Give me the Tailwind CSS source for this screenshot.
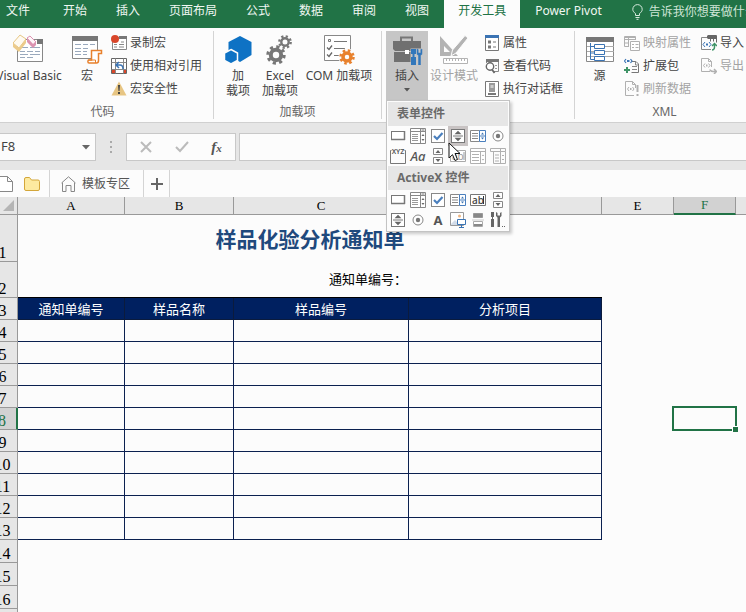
<!DOCTYPE html>
<html lang="zh-CN">
<head>
    <meta charset="UTF-8">
    <meta name="viewport" content="width=device-width, initial-scale=1.0">
    <title>样品化验分析通知单</title>
    <script src="https://cdn.jsdelivr.net/npm/@tailwindcss/browser@4"></script>
</head>
<body class="h-screen overflow-hidden flex flex-col bg-[#fcfcfc] text-xs text-[#444] font-['Noto_Sans','Noto_Sans_CJK_SC',sans-serif]">

    <!-- Shared icons -->
    <svg class="hidden">
        <symbol id="i-button" viewBox="0 0 16 16"><rect x="1.5" y="3.5" width="13" height="8" fill="#fff" stroke="#777"/><path d="M1 11.500h14M14.500 3v9" stroke="#777" stroke-width="1.500"/></symbol>
        <symbol id="i-list" viewBox="0 0 16 16"><path d="M.5 .5h15v15H.5zM10.500 .5v15M.5 3.500h15" fill="#fff" stroke="#888"/><path d="M2 6.500h6M2 8.500h6M2 10.500h6M2 12.500h6" stroke="#999"/><path d="M11.500 2h3" stroke="#777"/><path d="M11.500 8L13 6l1.500 2zM11.500 11l1.500 2 1.500-2z" fill="#666"/></symbol>
        <symbol id="i-check" viewBox="0 0 16 16"><rect x="1.500" y="1.500" width="13" height="13" fill="#fff" stroke="#888"/><path d="M4 8l3 3 5.500-6" fill="none" stroke="#4a7fbd" stroke-width="2.200"/></symbol>
        <symbol id="i-spin" viewBox="0 0 16 16"><rect x="1.500" y="1.500" width="13" height="13" fill="#fff" stroke="#777"/><path d="M3 8h10" stroke="#777"/><path d="M4.500 6.200L8 2.700l3.500 3.500zM4.500 9.800L8 13.300l3.500-3.500z" fill="#666"/></symbol>
        <symbol id="i-combo" viewBox="0 0 16 16"><path d="M9.500 2.500h-9v11h9" fill="#fff" stroke="#888"/><path d="M2 5.500h6M2 8h6M2 10.500h6" stroke="#888"/><path d="M9.500 2.500h6v11h-6zM9.500 8h6" fill="#fff" stroke="#4a7fbd"/><path d="M11 6.500l1.500-2 1.500 2zM11 9.500l1.500 2 1.500-2z" fill="#3b74b4"/></symbol>
        <symbol id="i-radio" viewBox="0 0 16 16"><circle cx="8" cy="8" r="5" fill="#fff" stroke="#888"/><circle cx="8" cy="8" r="2.200" fill="#777"/></symbol>
        <symbol id="i-scroll" viewBox="0 0 16 16"><path d="M3.500 .5h9v6h-9zM3.500 9.500h9v6h-9z" fill="#fff" stroke="#888"/><path d="M5.500 5L8 2l2.500 3zM5.500 11L8 14l2.500-3z" fill="#666"/></symbol>
        <symbol id="i-listbox" viewBox="0 0 16 16"><path d="M.5 .5h15v15H.5zM10.500 3.500v12M.5 3.500h15" fill="#fff" stroke="#b0b0b0"/><path d="M2 6.500h7M2 9.500h7M2 12.500h7" stroke="#b0b0b0"/><path d="M11.800 8L13 6.500 14.200 8zM11.800 11l1.200 1.500 1.200-1.500z" fill="#aaa"/></symbol>
    </svg>

    <!-- Ribbon tabs -->
    <header class="flex flex-none gap-px h-7 bg-[#217346] text-[#f0f7f2] leading-[22px] whitespace-nowrap overflow-hidden">
        <button class="flex-none pl-[6px] pr-[18px] pb-[6px]">文件</button>
        <button class="flex-none px-[14px] pb-[6px]">开始</button>
        <button class="flex-none px-[14px] pb-[6px]">插入</button>
        <button class="flex-none px-[14px] pb-[6px]">页面布局</button>
        <button class="flex-none px-[14px] pb-[6px]">公式</button>
        <button class="flex-none px-[14px] pb-[6px]">数据</button>
        <button class="flex-none px-[14px] pb-[6px]">审阅</button>
        <button class="flex-none px-[14px] pb-[6px]">视图</button>
        <button class="flex-none px-[14px] pb-[6px] bg-[#fcfcfc] text-[#217346]">开发工具</button>
        <button class="flex-none px-[14px] pb-[6px]">Power Pivot</button>
        <label class="flex flex-1 min-w-0 items-center gap-[6px] pl-[15px] pb-[4px]">
            <svg class="flex-none" width="11" height="16" viewBox="0 0 11 16" fill="none" stroke="#d6eadd"><path d="M3.500 11.500v-2C2 8.500.8 7.200.8 5.300a4.700 4.700 0 0 1 9.400 0c0 1.900-1.200 3.200-2.700 4.200v2zM3.500 13.500h4M4.500 15.300h2"/></svg>
            <input type="text" aria-label="告诉我你想要做什么" placeholder="告诉我你想要做什么" class="flex-1 min-w-0 outline-none placeholder:text-[#cfe5d7]">
        </label>
    </header>

    <!-- Ribbon -->
    <div class="flex flex-none -ml-2 pt-[3px] pb-[3px] border-b border-[#d0d0d0] leading-[15px] whitespace-nowrap">
        <!-- 代码 -->
        <section class="flex flex-none flex-col border-r border-[#d4d4d4]">
            <div class="flex h-[70px]">
                <button class="flex flex-col items-center w-[74px] pt-[2px]">
                    <svg class="mb-[3px]" width="32" height="32" viewBox="0 0 32 32" fill="none"><path d="M4.500 6.500h25v22h-25z" fill="#fff" stroke="#888"/><path d="M24 6h6v5h-6z" fill="#777"/><path d="M7 14.500h8M17 14.500h10M7 18.500h5M14 18.500h6M22 18.500h5M7 21.500h8M17 21.500h10M7 24.500h5M14 24.500h6" stroke="#9aa9bd"/><path d="M0 10l7-8 6 4-7 9z" fill="#fffaf0" stroke="#e6c684"/><path d="M0 10l6 5v4l-6-5zM6 15l7-9v4l-7 9z" fill="#eccb8b"/><path d="M14 5l3-2 6 6-3 3z" fill="#fff5f9" stroke="#dc93b1"/><path d="M14 5l6 6v4l-6-6zM20 11l3-3v4l-3 3z" fill="#dc93b1"/></svg>
                    Visual Basic
                </button>
                <button class="flex flex-col items-center w-[42px] pt-[2px]">
                    <svg class="mb-[3px]" width="32" height="32" viewBox="0 0 32 32" fill="none"><path d="M1.500 3.500h25v22h-25z" fill="#fff" stroke="#888"/><path d="M1 3h26v5H1z" fill="#777"/><path d="M4 11.500h6M12 11.500h5M19 11.500h5M4 15.500h6M12 15.500h5M4 18.500h6M12 18.500h4M4 21.500h6M12 21.500h4" stroke="#9aa9bd"/><path d="M20.500 17.500h10v3h-3v7c0 2-1 2.500-2 2.500h-7.500c-1.500 0-1.500-3 0-3h2.500z" fill="#fff" stroke="#e8812d" stroke-width="1.500"/><path d="M17 27h7.500v3" stroke="#e8812d"/></svg>
                    宏
                </button>
                <div class="flex flex-col pl-[3px] pr-[11px]">
                    <button class="flex items-center gap-[3px] h-[23px]">
                        <svg width="16" height="16" viewBox="0 0 16 16" fill="none"><path d="M1.500 2.500h14v12h-14z" fill="#fff" stroke="#888"/><path d="M8 1h8v3H8z" fill="#777"/><path d="M3 9.500h3M8 9.500h5M3 12h3M8 12h5M10 7h3" stroke="#888"/><circle cx="4" cy="4" r="4" fill="#d9472b"/></svg>
                        录制宏
                    </button>
                    <button class="flex items-center gap-[3px] h-[23px]">
                        <svg width="16" height="16" viewBox="0 0 16 16" fill="none"><path d="M.5 .5h15v15H.5z" fill="#fff" stroke="#666"/><path d="M.5 4.500h15M.5 11.500h15M4.500 .5v15M12.500 .5v15" stroke="#888"/><path d="M5 5h7v6H5z" fill="#fff"/><path d="M1 12h3v3H1zM13 12h2v3h-2z" fill="#d9472b"/><path d="M5 7h4c3 0 3 2 3 4M8 4L5 7l3 3" stroke="#3b74b4" stroke-width="1.500"/></svg>
                        使用相对引用
                    </button>
                    <button class="flex items-center gap-[3px] h-[23px]">
                        <svg width="16" height="16" viewBox="0 0 16 16"><path d="M8 .5L15.500 14.500H.5z" fill="#e7c583"/><path d="M7 4h2l-.5 6h-1zM7 11h2v2H7z" fill="#444"/></svg>
                        宏安全性
                    </button>
                </div>
            </div>
            <h2 class="text-center text-[#666] pt-[3px]">代码</h2>
        </section>

        <!-- 加载项 -->
        <section class="flex flex-none flex-col border-r border-[#d4d4d4]">
            <div class="flex h-[70px] pl-[5px] pr-[6px]">
                <button class="flex flex-col items-center w-[38px] pt-[2px]">
                    <svg class="mb-[3px]" width="32" height="32" viewBox="0 0 32 32" fill="#0e72c4"><path d="M18 3l11.500 6v13L18 29 6.500 22V9z"/><path d="M9 16.500l6.500 3.500v7.500L9 31l-6.500-3.500V20z" stroke="#fcfcfc" stroke-width="1.500"/></svg>
                    <span>加</span>
                    <span>载项</span>
                </button>
                <button class="flex flex-col items-center w-[46px] pt-[2px]">
                    <svg class="mb-[3px]" width="32" height="32" viewBox="0 0 32 32" fill="none" stroke="#777"><circle cx="12" cy="22" r="5.200" stroke-width="4"/><circle cx="12" cy="22" r="8.200" stroke-width="3" stroke-dasharray="3.200 3.240"/><circle cx="21" cy="9" r="3.700" stroke-width="2.400"/><circle cx="21" cy="9" r="5.700" stroke-width="2.400" stroke-dasharray="2.200 2.277"/></svg>
                    <span>Excel</span>
                    <span>加载项</span>
                </button>
                <button class="flex flex-col items-center w-[72px] pt-[2px]">
                    <svg class="mb-[3px]" width="32" height="32" viewBox="0 0 32 32" fill="none"><path d="M1.500 2.500h26v25h-26z" fill="#fff" stroke="#888"/><path d="M5.500 6.500h2v2h-2zM11 8.500h13M11 15.500h11M11 22.500h5" stroke="#777"/><path d="M4 14.500l2 2 3-4M4 21.500l2 2 3-4" stroke="#666" stroke-width="1.300"/><circle cx="24" cy="24" r="8.500" fill="#fcfcfc"/><circle cx="24" cy="24" r="4" stroke="#e8812d" stroke-width="3.500"/><circle cx="24" cy="24" r="6.500" stroke="#e8812d" stroke-width="2.500" stroke-dasharray="2.550 2.555"/></svg>
                    COM 加载项
                </button>
            </div>
            <h2 class="text-center text-[#666] pt-[3px]">加载项</h2>
        </section>

        <!-- 控件 -->
        <section class="flex flex-none flex-col border-r border-[#d4d4d4]">
            <div class="flex h-[70px] pl-1 pr-[11px]">
                <div class="relative">
                    <button aria-expanded="true" class="flex flex-col items-center w-[42px] h-[69px] pt-[2px] bg-[#c6c6c6]">
                        <svg class="mb-[3px]" width="32" height="32" viewBox="0 0 32 32" fill="none"><path d="M10 8V4.500h11V8" stroke="#777" stroke-width="2"/><path d="M2 8h28v8l-2 2H4l-2-2z" fill="#707070"/><path d="M3 19h26v10H3z" fill="#707070"/><path d="M14 17h4v4h-4z" fill="#fff"/><path d="M19.500 15.500H32V32H19.500z" fill="#c6c6c6"/><path d="M20 16h5v5h-1.500v3H25v8h-5v-8h1.500v-3H20z" fill="#3277bb"/><path d="M26 16v4c0 1.500.5 2 1.500 2.500V32h2v-9.500c1-.5 1.500-1 1.500-2.500v-4l-1.200.6V20h-2.600v-3.400z" fill="#3277bb" stroke="#3277bb" stroke-width=".5"/></svg>
                        插入
                        <svg class="mt-[5px]" width="6" height="4" viewBox="0 0 6 4"><path d="M0 0h6L3 3.500z" fill="#555"/></svg>
                    </button>
                    <!-- Controls menu -->
                    <div class="absolute left-0 top-[69px] z-20 p-px border border-[#c3c3c3] bg-[#fcfcfc] shadow-[2px_2px_3px_rgba(0,0,0,0.2)]">
                        <h3 class="h-6 pl-[9px] leading-6 bg-[#e6e6e6] font-bold text-[#6a6a6a]">表单控件</h3>
                        <div class="grid grid-cols-[repeat(6,20px)] auto-rows-[20px]">
                            <button aria-label="按钮" class="grid place-items-center"><svg width="16" height="16"><use href="#i-button"/></svg></button>
                            <button aria-label="组合框" class="grid place-items-center"><svg width="16" height="16"><use href="#i-list"/></svg></button>
                            <button aria-label="复选框" class="grid place-items-center"><svg width="16" height="16"><use href="#i-check"/></svg></button>
                            <button aria-label="数值调节钮" class="grid place-items-center bg-[#c8c3c3]"><svg width="16" height="16"><use href="#i-spin"/></svg></button>
                            <button aria-label="列表框" class="grid place-items-center"><svg width="16" height="16"><use href="#i-combo"/></svg></button>
                            <button aria-label="选项按钮" class="grid place-items-center"><svg width="16" height="16"><use href="#i-radio"/></svg></button>
                            <button aria-label="分组框" class="grid place-items-center">
                                <svg width="16" height="18" viewBox="0 0 16 18"><path d="M1.500 3.500h-1v13h15v-13h-1" fill="none" stroke="#777"/><text x="8" y="7" text-anchor="middle" font-size="7" font-weight="600" fill="#555">XYZ</text></svg>
                            </button>
                            <button aria-label="标签" class="grid place-items-center text-[13px] leading-4 italic font-medium text-[#555]">Aa</button>
                            <button aria-label="滚动条" class="grid place-items-center"><svg width="16" height="16"><use href="#i-scroll"/></svg></button>
                            <button aria-label="文本域" disabled class="grid place-items-center">
                                <svg width="16" height="16" viewBox="0 0 16 16"><path d="M.5 2.500h15v11H.5z" fill="#fff" stroke="#aaa"/><text x="2" y="12" font-size="10" fill="#999">ab</text><path d="M14 4v8" stroke="#999"/></svg>
                            </button>
                            <button aria-label="组合列表编辑框" disabled class="grid place-items-center"><svg width="16" height="16"><use href="#i-listbox"/></svg></button>
                            <button aria-label="组合下拉编辑框" disabled class="grid place-items-center">
                                <svg width="16" height="16" viewBox="0 0 16 16" fill="none" stroke="#b0b0b0"><path d="M.5 .5h15v3H.5zM3.500 3.500v12h12v-12M10.500 .5v15M5 7h4M5 10h4M5 13h4M12 8l1-1 1 1M12 11l1 1 1-1"/></svg>
                            </button>
                        </div>
                        <h3 class="h-6 pl-[9px] leading-6 bg-[#e6e6e6] font-bold text-[#6a6a6a]">ActiveX 控件</h3>
                        <div class="grid grid-cols-[repeat(6,20px)] auto-rows-[20px]">
                            <button aria-label="命令按钮" class="grid place-items-center"><svg width="16" height="16"><use href="#i-button"/></svg></button>
                            <button aria-label="组合框" class="grid place-items-center"><svg width="16" height="16"><use href="#i-list"/></svg></button>
                            <button aria-label="复选框" class="grid place-items-center"><svg width="16" height="16"><use href="#i-check"/></svg></button>
                            <button aria-label="列表框" class="grid place-items-center"><svg width="16" height="16"><use href="#i-combo"/></svg></button>
                            <button aria-label="文本框" class="grid place-items-center">
                                <svg width="16" height="16" viewBox="0 0 16 16"><path d="M.5 2.500h15v11H.5z" fill="#fff" stroke="#777"/><text x="2" y="12" font-size="10" font-weight="500" fill="#444">ab</text><path d="M13.500 4v8" stroke="#333"/></svg>
                            </button>
                            <button aria-label="滚动条" class="grid place-items-center"><svg width="16" height="16"><use href="#i-scroll"/></svg></button>
                            <button aria-label="数值调节钮" class="grid place-items-center"><svg width="16" height="16"><use href="#i-spin"/></svg></button>
                            <button aria-label="选项按钮" class="grid place-items-center"><svg width="16" height="16"><use href="#i-radio"/></svg></button>
                            <button aria-label="标签" class="grid place-items-center text-[13px] leading-4 font-bold text-[#555]">A</button>
                            <button aria-label="图像" class="grid place-items-center">
                                <svg width="16" height="16" viewBox="0 0 16 16" fill="none"><path d="M.5 .5h13v13H.5z" fill="#fff" stroke="#999"/><path d="M1 12l4-4 3 3v2H1z" fill="#d3dce8"/><circle cx="9.500" cy="4" r="1.500" fill="#edb581"/><path d="M7.500 7.500h8v5h-8z" fill="#fff" stroke="#3b74b4"/><path d="M11.500 13v2M9 15.500h5" stroke="#3b74b4"/></svg>
                            </button>
                            <button aria-label="切换按钮" class="grid place-items-center">
                                <svg width="16" height="16" viewBox="0 0 16 16"><path d="M3.500 1.500h9v4h-9z" fill="#888" stroke="#999"/><path d="M2 8h12" stroke="#ccc"/><path d="M3.500 9.500h9v5h-9z" fill="#fff" stroke="#aaa"/><path d="M4 12h8v2H4z" fill="#888"/></svg>
                            </button>
                            <button aria-label="其他控件" class="grid place-items-center">
                                <svg width="16" height="16" viewBox="0 0 16 16" fill="#666"><path d="M1 0h3v5H3v2h1v8H1V7h1V5H1zM6 0v4l1.500 1.500V15h2.500V5.500L11.500 4V0L10 1v2.500H7.500V1z"/><path d="M12 14h1v1h-1zM14 14h1v1h-1z"/></svg>
                            </button>
                        </div>
                        <svg class="absolute left-[61px] top-[41px]" width="13" height="20" viewBox="0 0 13 20"><path d="M1 1v15l3.500-3.300L7 18.500l2.500-1-2.500-6h5z" fill="#fff" stroke="#111"/></svg>
                    </div>
                </div>
                <button disabled class="flex flex-col items-center w-[52px] pt-[2px] text-[#a3a3a3]">
                    <svg class="mb-[3px]" width="32" height="32" viewBox="0 0 32 32" fill="none"><path d="M2 3v20h18zM6 13v6h6z" fill="#b3b3b3" fill-rule="evenodd"/><path d="M27 2.500l3 2.500-12 15-5 3 1.500-6z" fill="#b3b3b3" stroke="#fcfcfc"/><path d="M5.500 25.500h24v5h-24z" fill="#fff" stroke="#b3b3b3"/><path d="M8.500 26v2M11.500 26v2M14.500 26v2M17.500 26v2M20.500 26v2M23.500 26v2M26.500 26v2" stroke="#b3b3b3"/></svg>
                    设计模式
                </button>
                <div class="flex flex-col pl-[5px]">
                    <button class="flex items-center gap-1 h-[23px]">
                        <svg width="14" height="16" viewBox="0 0 14 16" fill="none"><path d="M.5 1v14.500h13V1" fill="#fff" stroke="#777"/><path d="M0 0h14v3H0z" fill="#3b74b4"/><path d="M3 5.500h3v3H3zM3 10.500h3v3H3z" fill="#777"/><path d="M8 7h3M8 12h3" stroke="#777"/></svg>
                        属性
                    </button>
                    <button class="flex items-center gap-1 h-[23px]">
                        <svg width="14" height="16" viewBox="0 0 14 16" fill="none"><path d="M1.500 5V2.500h12v11H9" stroke="#888"/><path d="M1 1h13v3H1z" fill="#777"/><path d="M10 7.500h2M10 10.500h2" stroke="#999"/><circle cx="5" cy="8.500" r="3.700" fill="#fff" stroke="#666" stroke-width="1.400"/><path d="M7 11.500L9.500 15" stroke="#666" stroke-width="1.800"/></svg>
                        查看代码
                    </button>
                    <button class="flex items-center gap-1 h-[23px]">
                        <svg width="14" height="16" viewBox="0 0 14 16" fill="none"><path d="M.5 .5h13v15H.5z" fill="#fff" stroke="#777"/><path d="M4 2h6v9H4z" fill="#999"/><path d="M5.500 4h3v3h-3z" fill="#ccc"/><path d="M3 13h8" stroke="#777" stroke-width="2"/></svg>
                        执行对话框
                    </button>
                </div>
            </div>
            <h2 class="text-center text-[#666] pt-[3px]">控件</h2>
        </section>

        <!-- XML -->
        <section class="flex flex-none flex-col">
            <div class="flex h-[70px] pr-[10px]">
                <button class="flex flex-col items-center w-[49px] pt-[2px]">
                    <svg class="mb-[3px]" width="32" height="32" viewBox="0 0 32 32" fill="none"><path d="M2.500 4.500h27v24h-27z" fill="#fff" stroke="#888"/><path d="M2 4h28v5H2z" fill="#777"/><path d="M3 13.500h27M3 18.500h27M3 23.500h27" stroke="#aaa"/><path d="M6.500 10v16.500H10M6.500 13.500H10M6.500 20H10" stroke="#3b74b4"/><path d="M10.500 11.500h10v4h-10zM10.500 17.500h10v4h-10zM10.500 23.500h10v4h-10z" fill="#fff" stroke="#3b74b4"/></svg>
                    源
                </button>
                <div class="flex flex-col">
                    <button disabled class="flex items-center gap-[3px] h-[23px] text-[#a3a3a3]">
                        <svg width="16" height="16" viewBox="0 0 16 16" fill="none" stroke="#b0b0b0"><path d="M5 11.500H.5v-10h11V5M.5 4.500h11M4.500 1.500v10M.5 8h4"/><path d="M.5 2.500h11"/><path d="M6.500 6.500h9v9h-9zM8 9.500h2M11.500 9.500h3M8 12.500h2M11.500 12.500h3" fill="#fff"/></svg>
                        映射属性
                    </button>
                    <button class="flex items-center gap-[3px] h-[23px]">
                        <svg width="16" height="16" viewBox="0 0 16 16" fill="none"><path d="M8 3.500h4l2.500 2.500v8.500h-7" stroke="#777"/><path d="M8 8.500h5M8 11.500h5M11.500 3v4h3" stroke="#888"/><path d="M2 1L.5 3 2 5M6.500 1L8 3 6.500 5" stroke="#3b74b4" stroke-width="1.200"/><path d="M3 2h2.500v2H3z" fill="#3b74b4"/><path d="M3 9v6M0 12h6" stroke="#3f9467" stroke-width="2"/></svg>
                        扩展包
                    </button>
                    <button disabled class="flex items-center gap-[3px] h-[23px] text-[#a3a3a3]">
                        <svg width="16" height="16" viewBox="0 0 16 16" fill="none" stroke="#b0b0b0"><path d="M10 14.500H1.500V.5h7l3 3V7M8.500 .5v3h3M5 6l-1.500 2L5 10M8.500 6L10 8l-1.500 2"/><path d="M6 8h1.500" stroke-width="2"/><path d="M13.500 4v7M13.500 13v2" stroke-width="2"/></svg>
                        刷新数据
                    </button>
                </div>
                <div class="flex flex-col pl-[10px]">
                    <button class="flex items-center gap-[3px] h-[23px]">
                        <svg width="16" height="16" viewBox="0 0 16 16" fill="none"><path d="M6.500 .5h9v7M6.500 3.500h9M9.500 .5v6M12.500 .5v6" stroke="#666"/><path d="M6 1h10v2H6z" fill="#666"/><path d="M10 14.500H.5v-12H6" stroke="#888"/><path d="M4 7L2 9.500 4 12M8 7l2 2.500L8 12" stroke="#3b74b4"/><path d="M5 8.500h2v2H5z" fill="#3b74b4"/><path d="M11 15c3 0 2.500-3 2.500-6M11 11l2.500-2.500L16 11" stroke="#3f9467" stroke-width="1.500"/></svg>
                        导入
                    </button>
                    <button disabled class="flex items-center gap-[3px] h-[23px] text-[#a3a3a3]">
                        <svg width="16" height="16" viewBox="0 0 16 16" fill="none" stroke="#b0b0b0"><path d="M9 13.500H.5V.5h7l3 3V9M7.500 .5v3h3M4 5.500l-1.500 2L4 9.500M7.500 5.500l1.500 2-1.500 2"/><path d="M5 7.500h1.500" stroke-width="2"/><path d="M9 11.500c0 2 2 2 6 2M13 11l2.500 2.500L13 16" stroke-width="1.500"/></svg>
                        导出
                    </button>
                </div>
            </div>
            <h2 class="text-center text-[#666] pt-[3px]">XML</h2>
        </section>
    </div>

    <!-- Formula bar -->
    <div class="flex flex-none pt-[10px] pb-[9px] bg-[#e6e6e6]">
        <div class="flex flex-none items-center w-24 h-7 bg-[#fcfcfc] border border-l-0 border-[#c8c8c8]">
            <input type="text" aria-label="名称框" value="F8" class="flex-1 min-w-0 pl-px text-[13px] outline-none">
            <button aria-label="名称列表" class="px-[5px]"><svg width="8" height="5" viewBox="0 0 8 5"><path d="M0 0h8L4 4.500z" fill="#666"/></svg></button>
        </div>
        <svg class="flex-none mx-[14px] mt-[8px]" width="2" height="12" viewBox="0 0 2 12" fill="#aaa"><path d="M0 0h2v2H0zM0 5h2v2H0zM0 10h2v2H0z"/></svg>
        <div class="flex flex-none items-center justify-around w-[110px] h-7 px-[2px] bg-[#fcfcfc] border border-[#c8c8c8]">
            <button aria-label="取消" disabled><svg width="12" height="12" viewBox="0 0 12 12"><path d="M1 1l10 10M11 1L1 11" stroke="#bbb" stroke-width="2"/></svg></button>
            <button aria-label="输入" disabled><svg width="14" height="12" viewBox="0 0 14 12"><path d="M1 6l4 4 8-9" fill="none" stroke="#bbb" stroke-width="2"/></svg></button>
            <button aria-label="插入函数" class="font-['Liberation_Serif',serif] italic font-bold text-[15px] leading-5 text-[#555]">f<span class="text-[11px]">x</span></button>
        </div>
        <input type="text" aria-label="编辑栏" class="flex-1 min-w-0 h-7 ml-[3px] bg-[#fcfcfc] border border-r-0 border-[#c8c8c8] outline-none">
    </div>

    <!-- Document tabs -->
    <div class="flex flex-none h-[27px] text-[#555]">
        <div class="flex items-center gap-[10px] w-[50px] border-r border-[#d4d4d4]">
            <button aria-label="新建" class="-ml-px"><svg width="15" height="16" viewBox="0 0 15 16"><path d="M.5 .5h8l5 5v10H.5zM8.500 .5v5h5" fill="#fff" stroke="#888"/></svg></button>
            <button aria-label="打开"><svg width="16" height="14" viewBox="0 0 16 14"><path d="M.5 12V2Q.5 .5 2 .5h3.500L7.500 3H14q1.500 0 1.500 1.500V12q0 1.500-1.500 1.500H2Q.5 13.500 .5 12z" fill="#fdeaa0" stroke="#d3a63a"/></svg></button>
        </div>
        <button class="flex items-center gap-[6px] w-[94px] pl-[11px] border-r border-[#d4d4d4]">
            <svg width="15" height="16" viewBox="0 0 15 16"><path d="M.5 7L7.500 .8 14.500 7M1.500 6.500v9H5v-6h5v6h3.500v-9" fill="none" stroke="#888"/></svg>
            模板专区
        </button>
        <button aria-label="添加" class="grid place-items-center w-[26px] border-r border-[#d4d4d4]"><svg width="12" height="12" viewBox="0 0 12 12"><path d="M6 0v12M0 6h12" stroke="#666" stroke-width="2"/></svg></button>
    </div>

    <!-- Sheet -->
    <div class="flex-1 min-h-0 overflow-hidden -ml-3">
        <table class="table-fixed w-full border-separate border-spacing-0 text-[13px] text-black">
            <colgroup>
                <col class="w-[30px]">
                <col class="w-[107px]">
                <col class="w-[109px]">
                <col class="w-[175px]">
                <col class="w-[193px]">
                <col class="w-[72px]">
                <col class="w-[62px]">
                <col>
            </colgroup>
            <thead>
                <tr class="h-[18px] bg-[#e6e6e6] font-['Liberation_Serif',serif] text-[13px] leading-4">
                    <th class="p-0 border-r border-b border-[#999]"><svg class="ml-auto mr-[3px]" width="11" height="11" viewBox="0 0 11 11"><path d="M11 0v11H0z" fill="#b5b5b5"/></svg></th>
                    <th class="p-0 border-r border-b border-[#999] font-normal">A</th>
                    <th class="p-0 border-r border-b border-[#999] font-normal">B</th>
                    <th class="p-0 border-r border-b border-[#999] font-normal">C</th>
                    <th class="p-0 border-r border-b border-[#999] font-normal">D</th>
                    <th class="p-0 border-r border-b border-[#999] font-normal">E</th>
                    <th class="p-0 border-r border-r-[#999] border-b-2 border-b-[#217346] bg-[#d2d2d2] font-normal text-[#217346]">F</th>
                    <th class="p-0 border-b border-[#999]"></th>
                </tr>
            </thead>
            <tbody id="sheet-rows">
                <tr class="h-[47px]">
                    <th class="p-0 align-bottom border-r border-b border-[#999] bg-[#e6e6e6] font-['Liberation_Serif',serif] font-normal text-base leading-4">1</th>
                    <td colspan="4" class="p-0 text-center text-[21px] leading-7 font-bold text-[#1f497d]">样品化验分析通知单</td>
                    <td></td><td></td><td></td>
                </tr>
                <tr class="h-9">
                    <th class="p-0 align-bottom border-r border-b border-[#999] bg-[#e6e6e6] font-['Liberation_Serif',serif] font-normal text-base leading-4">2</th>
                    <td class="p-0 border-b border-black"></td>
                    <td class="p-0 border-b border-black"></td>
                    <td class="p-0 pr-[2px] border-b border-black text-right">通知单编号：</td>
                    <td class="p-0 border-b border-black"></td>
                    <td></td><td></td><td></td>
                </tr>
                <tr class="h-[22px] leading-5">
                    <th class="p-0 align-bottom border-r border-b border-[#999] bg-[#e6e6e6] font-['Liberation_Serif',serif] font-normal text-base leading-4">3</th>
                    <td class="p-0 border-r border-b border-[#0b1b3d] bg-[#002060] text-center text-white">通知单编号</td>
                    <td class="p-0 border-r border-b border-[#0b1b3d] bg-[#002060] text-center text-white">样品名称</td>
                    <td class="p-0 border-r border-b border-[#0b1b3d] bg-[#002060] text-center text-white">样品编号</td>
                    <td class="p-0 border-r border-b border-[#0b1b3d] bg-[#002060] text-center text-white">分析项目</td>
                    <td></td><td></td><td></td>
                </tr>
            </tbody>
        </table>
    </div>

    <script>
        const sheetRows = document.getElementById('sheet-rows');
        const borderedCell = '<td class="p-0 border-r border-b border-[#0b2050]"></td>';
        const emptyCell = '<td class="p-0"></td>';
        const selectedCell = `<td class="p-0 relative">
            <span class="absolute -left-[2px] -top-[2px] -right-px -bottom-px border-2 border-[#217346]"></span>
            <span class="absolute -right-[2px] -bottom-[2px] w-[6px] h-[6px] border-t border-l border-white bg-[#217346]"></span>
        </td>`;

        for (let n = 4; n <= 17; n++) {
            const row = document.createElement('tr');
            row.className = n <= 13 ? 'h-[22px]' : 'h-[23px]';
            const head = n === 8
                ? '<th class="p-0 align-bottom border-r-2 border-r-[#217346] border-b border-b-[#999] bg-[#d2d2d2] font-[\'Liberation_Serif\',serif] font-normal text-base leading-4 text-[#217346]">8</th>'
                : `<th class="p-0 align-bottom border-r border-b border-[#999] bg-[#e6e6e6] font-['Liberation_Serif',serif] font-normal text-base leading-4">${n}</th>`;
            const cells = (n <= 13 ? borderedCell : emptyCell).repeat(4);
            row.innerHTML = head + cells + emptyCell + (n === 8 ? selectedCell : emptyCell) + emptyCell;
            sheetRows.appendChild(row);
        }
    </script>
</body>
</html>
